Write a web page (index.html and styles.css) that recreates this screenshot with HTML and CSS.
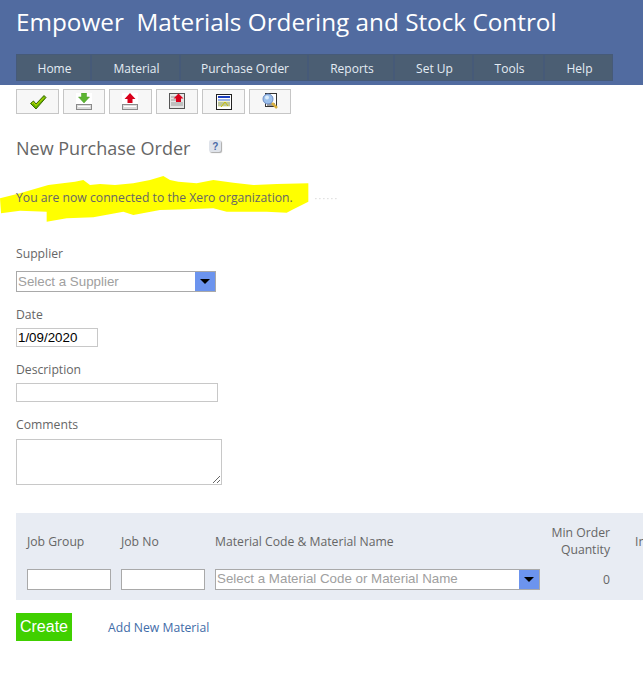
FILE: index.html
```html
<!DOCTYPE html>
<html lang="en">
<head>
<meta charset="utf-8">
<title>New Purchase Order</title>
<link rel="stylesheet" href="styles.css">
</head>
<body>
<header class="header">
  <h1 class="title">Empower&nbsp; Materials Ordering and Stock Control</h1>
  <nav class="nav">
    <a class="nav-item nav-home">Home</a>
    <a class="nav-item nav-material">Material</a>
    <a class="nav-item nav-po">Purchase Order</a>
    <a class="nav-item nav-reports">Reports</a>
    <a class="nav-item nav-setup">Set Up</a>
    <a class="nav-item nav-tools">Tools</a>
    <a class="nav-item nav-help">Help</a>
  </nav>
</header>
<div class="toolbar">
  <button class="tool tool-wide"><svg width="18" height="16" viewBox="0 0 18 16"><path d="M1.500 9.500 4.500 7 7 10 15 1.500 17 3.500 7 15z" fill="#62b000" stroke="#3c6a00"/><path d="M3 9.500 4.500 8.500 7 11.500 15 3.500" fill="none" stroke="#d6e800"/></svg></button>
  <button class="tool"><svg width="17" height="18" viewBox="0 0 17 18"><rect width="16" height="11" fill="#fff"/><rect x=".5" y="11.500" width="15" height="5" fill="#dcdcdc" stroke="#8a8a8a"/><rect x="2" y="13" width="12" height="1" fill="#fff"/><path d="M5.500 0h5v4h3L8 10 2.500 4h3z" fill="#5cb531" stroke="#4a9a2a" stroke-width=".5"/></svg></button>
  <button class="tool tool-wide"><svg width="17" height="18" viewBox="0 0 17 18"><rect width="16" height="11" fill="#fff"/><rect x=".5" y="11.500" width="15" height="5" fill="#dcdcdc" stroke="#8a8a8a"/><rect x="2" y="13" width="12" height="1" fill="#fff"/><path d="M5.500 10V6h-3L8 0l5.500 6h-3v4z" fill="#d9001b"/></svg></button>
  <button class="tool"><svg width="17" height="17" viewBox="0 0 17 17"><rect x=".5" y=".5" width="15" height="15" fill="#e6e6e6" stroke="#555"/><path d="M2 4h5M2 7h5M2 10h12M2 12h12" stroke="#999"/><path d="M7 9V5.500H4.500L9.500 .5l5 5H12V9z" fill="#d9001b"/></svg></button>
  <button class="tool tool-wide"><svg width="16" height="16" viewBox="0 0 16 16"><rect x=".5" y=".5" width="15" height="15" fill="#fff" stroke="#222"/><rect x="2" y="2" width="12" height="2" fill="#1c3fc0"/><path d="M2 6h12" stroke="#3a66d0"/><rect x="2" y="7" width="12" height="6" fill="#eef0c8"/><path d="M2 9h12M2 11h12" stroke="#8a9a70"/><path d="M5 13l4-5 3 4" fill="none" stroke="#c8c000"/></svg></button>
  <button class="tool"><svg width="17" height="18" viewBox="0 0 17 18"><rect x="3.500" y=".5" width="11" height="13" fill="#fff" stroke="#333"/><path d="M5 11h8M5 13h8" stroke="#333"/><circle cx="6" cy="6" r="5" fill="#9cc0ec" stroke="#6c8cc4"/><circle cx="5" cy="4.500" r="2" fill="#dcecfb"/><path d="M10 10l5 5" stroke="#d8b040" stroke-width="2.500"/></svg></button>
</div>
<main class="content">
  <div class="heading">
    <h2 class="page-title">New Purchase Order</h2>
    <span class="help-icon">?</span>
  </div>
  <div class="message">
    <svg class="highlight" width="350" height="130" viewBox="0 0 1050 390" aria-hidden="true"><path d="M0 85 60 70 145 45 225 35 250 30 270 45 300 42 345 45 400 40 450 30 490 18 510 30 535 35 590 40 640 30 700 38 760 45 830 42 925 40 925 95 880 118 860 128 800 125 680 125 640 115 560 118 480 120 400 135 370 125 280 142 200 145 140 155 140 125 60 122 3 130z" fill="#ffff00"/><path d="M945 86h70" stroke="#ccc" stroke-width="2" stroke-dasharray="5 7"/></svg>
    <p class="message-text">You are now connected to the Xero organization.</p>
  </div>
  <div class="field field-supplier">
    <label class="label">Supplier</label>
    <div class="combo combo-supplier">
      <input class="combo-input" placeholder="Select a Supplier">
      <span class="combo-btn"><i class="caret"></i></span>
    </div>
  </div>
  <div class="field">
    <label class="label">Date</label>
    <input class="text date" value="1/09/2020">
  </div>
  <div class="field">
    <label class="label">Description</label>
    <input class="text description">
  </div>
  <div class="field">
    <label class="label label-comments">Comments</label>
    <textarea class="text comments"></textarea>
  </div>
  <section class="grid-band">
    <div class="grid-row">
      <div class="col col-job head">Job Group</div>
      <div class="col col-job head">Job No</div>
      <div class="col col-material head">Material Code &amp; Material Name</div>
      <div class="col col-min head right">Min Order<br>Quantity</div>
      <div class="col col-in head">In</div>
    </div>
    <div class="grid-row row-inputs">
      <input class="text col-job cell">
      <input class="text col-job cell">
      <div class="combo col-material combo-material">
        <input class="combo-input" placeholder="Select a Material Code or Material Name">
        <span class="combo-btn"><i class="caret"></i></span>
      </div>
      <div class="col col-min value right">0</div>
    </div>
  </section>
  <div class="actions">
    <button class="create">Create</button>
    <a class="add-link">Add New Material</a>
  </div>
</main>
</body>
</html>
```
FILE: styles.css
```css
* { box-sizing: border-box; }
html, body { margin: 0; padding: 0; overflow: hidden; }
body { width: 643px; height: 679px; background: #fff; font-family: "Open Sans", "Noto Sans", sans-serif; font-size: 13px; color: #666; }
.header { height: 85px; background: #516ba0; padding: 7px 30px 0 16px; }
.title { margin: 0; height: 47px; font-size: 24.300px; line-height: 30px; font-weight: 400; color: #fff; white-space: nowrap; }
.nav { display: flex; height: 27px; background: #4b5e73; border: 1px solid #465a78; }
.nav-item { display: flex; align-items: center; justify-content: center; padding: 1px 0 0 2px; color: #e4ecf4; font-size: 12px; border-right: 2px solid #465a78; }
.nav-home { width: 75px; }
.nav-material { width: 89px; }
.nav-po { width: 128px; }
.nav-reports { width: 86px; }
.nav-setup { width: 79px; }
.nav-tools { width: 71px; }
.nav-help { flex: 1; border-right: 0; }
.toolbar { display: flex; gap: 4px; padding: 4px 0 0 16px; height: 29px; }
.tool { display: flex; align-items: center; justify-content: center; width: 42px; height: 25px; padding: 0; background: #f7f7f7; border: 1px solid #c6c6c6; }
.tool-wide { width: 43px; }
.content { padding: 0 0 0 16px; }
.heading { display: flex; align-items: flex-start; height: 50px; padding-top: 22px; }
.page-title { margin: 0; font-size: 18px; line-height: 24px; font-weight: 400; color: #666; }
.help-icon { display: flex; align-items: center; justify-content: center; width: 12px; height: 12px; margin: 4px 0 0 19px; background: #dfe3ea; border-radius: 2px; color: #4a6aa8; font: 700 10px "Liberation Sans", sans-serif; box-shadow: 1px 1px 1px #aaa; }
.message { position: relative; height: 71px; padding-top: 25px; margin-left: -16px; }
.highlight { position: absolute; left: 0; top: 6px; }
.message-text { position: relative; margin: 0 0 0 16px; font-size: 12.200px; line-height: 18px; color: #666; }
.field { height: 55px; }
.field-supplier { height: 69px; padding-top: 8px; }
.label { display: block; height: 24px; line-height: 18px; padding-top: 2px; font-size: 12.200px; color: #666; }
.field-supplier .label { height: 28px; }
.label-comments { height: 25px; }
.combo { display: flex; height: 21px; border: 1px solid #a9a9a9; background: #fff; }
.combo-supplier { width: 200px; }
.combo-input { flex: 1; min-width: 0; border: 0; padding: 0 0 0 1px; outline: 0; background: transparent; font: 13.330px "Liberation Sans", Arial, sans-serif; }
.combo-material .combo-input { padding-bottom: 2px; }
.combo-input::placeholder { color: #a0a0a0; opacity: 1; }
.combo-btn { display: flex; align-items: center; justify-content: center; width: 20px; background: #6c94ee; }
.caret { width: 0; height: 0; border-left: 5px solid transparent; border-right: 5px solid transparent; border-top: 5px solid #000; }
.text { display: block; padding: 0 1px; border: 1px solid #c8c8c8; background: #fff; font: 13.330px "Liberation Sans", Arial, sans-serif; color: #000; outline: 0; }
.date { width: 82px; height: 19px; }
.description { width: 202px; height: 19px; }
.comments { width: 206px; height: 46px; }
.grid-band { width: 627px; height: 87px; margin-top: 44px; background: #e8ecf3; padding-top: 8px; overflow: hidden; }
.grid-row { display: flex; gap: 10px; padding-left: 11px; white-space: nowrap; }
.head { height: 40px; display: flex; align-items: center; font-size: 12.200px; line-height: 17px; color: #666; }
.col-job { width: 84px; flex: none; }
.col-material { width: 325px; flex: none; }
.col-min { width: 60px; flex: none; }
.col-in { width: 30px; flex: none; margin-left: 15px; }
.right { justify-content: flex-end; text-align: right; }
.row-inputs { margin-top: 7px; align-items: center; }
.cell { height: 21px; border-color: #a9a9a9; }
.value { font-size: 12.200px; line-height: 21px; padding-top: 1px; color: #666; }
.actions { display: flex; align-items: center; margin-top: 13px; }
.create { width: 56px; height: 28px; padding: 0; border: 0; background: #40d000; color: #fff; font: 16px "Liberation Sans", Arial, sans-serif; }
.add-link { margin-left: 36px; font-size: 12.200px; color: #3f6ca8; }
```
